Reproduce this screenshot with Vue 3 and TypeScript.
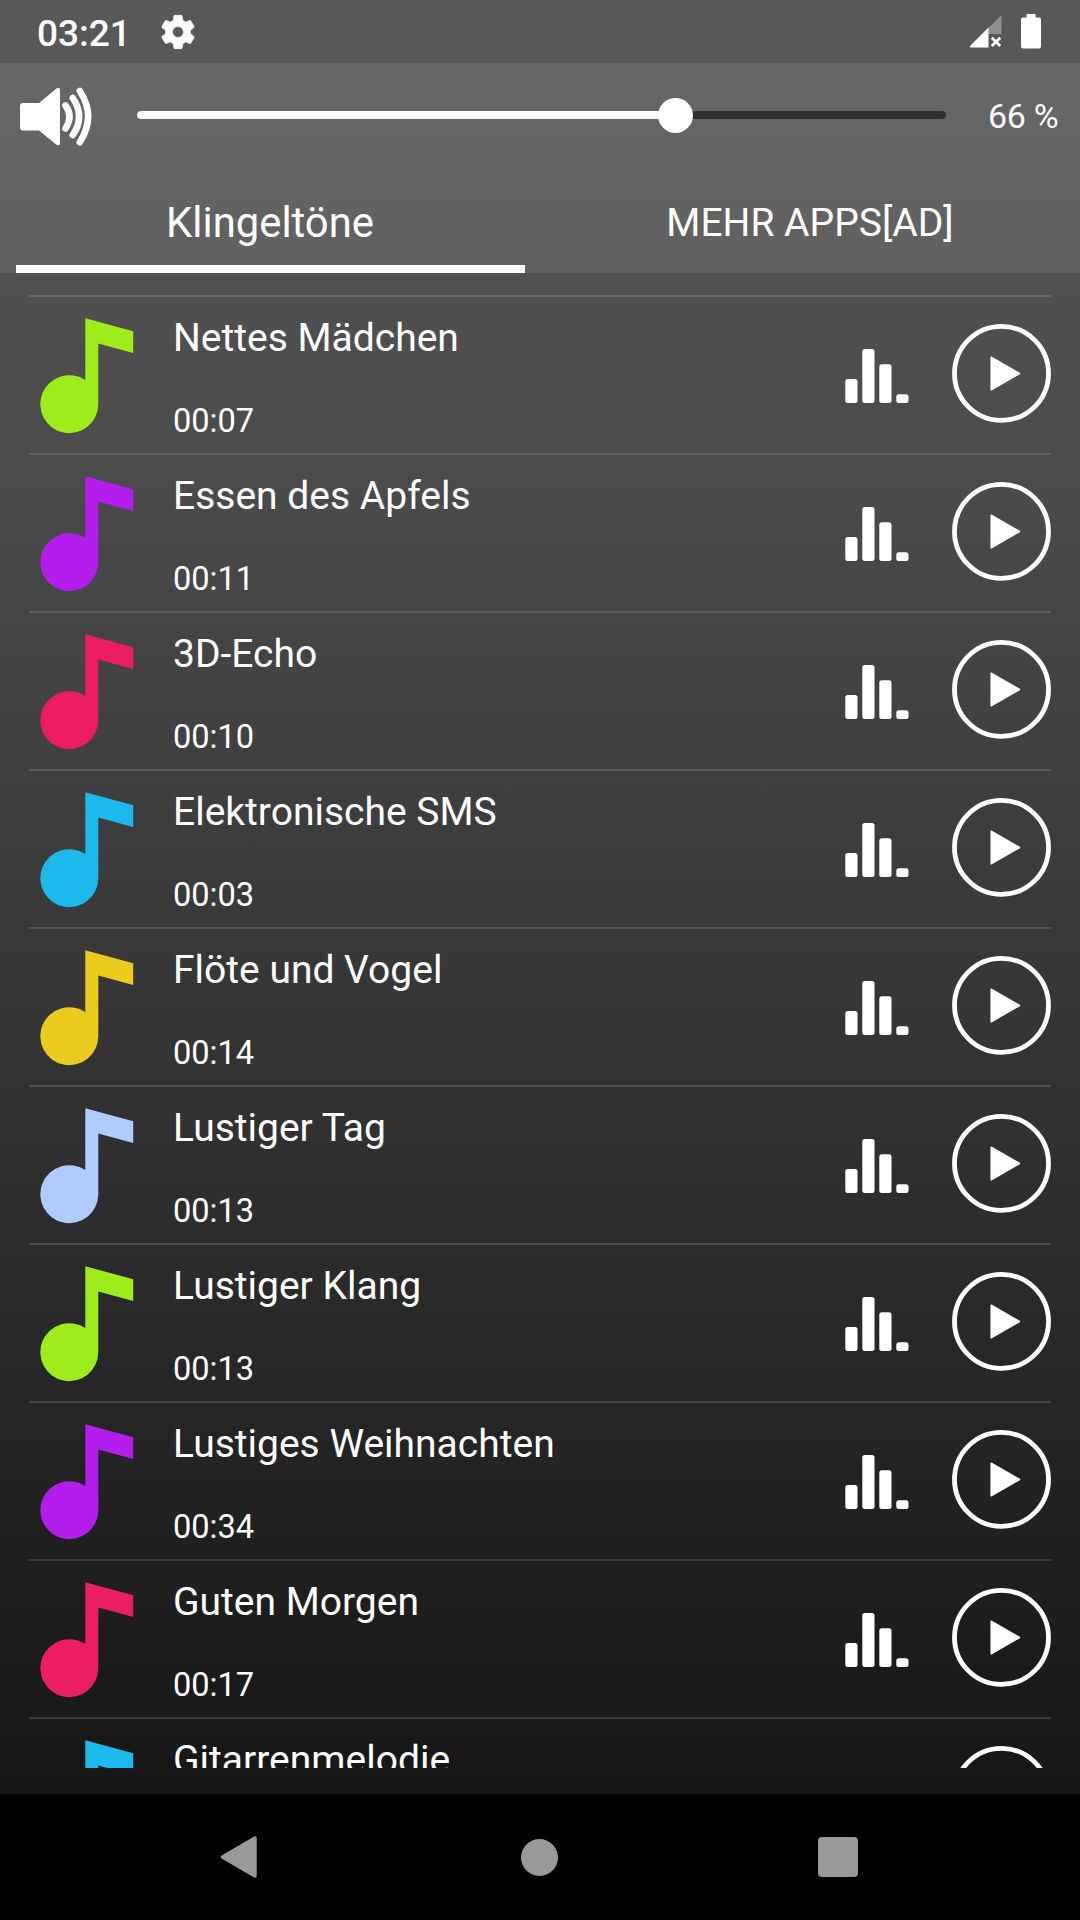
<script setup lang="ts">
import { ref } from 'vue'

interface Tone {
  title: string
  duration?: string
  color: string
}

const volume = ref(66)

const tones: Tone[] = [
  { title: 'Nettes Mädchen', duration: '00:07', color: '#9fec1c' },
  { title: 'Essen des Apfels', duration: '00:11', color: '#b31eec' },
  { title: '3D-Echo', duration: '00:10', color: '#ec1e62' },
  { title: 'Elektronische SMS', duration: '00:03', color: '#1eb9ec' },
  { title: 'Flöte und Vogel', duration: '00:14', color: '#ebcb1e' },
  { title: 'Lustiger Tag', duration: '00:13', color: '#b0ccff' },
  { title: 'Lustiger Klang', duration: '00:13', color: '#9fec1c' },
  { title: 'Lustiges Weihnachten', duration: '00:34', color: '#b31eec' },
  { title: 'Guten Morgen', duration: '00:17', color: '#ec1e62' },
  { title: 'Gitarrenmelodie', color: '#1eb9ec' },
]
</script>

<template>
  <div class="screen">
    <header class="status">
      <span class="clock">03:21</span>
      <svg class="gear" width="40" height="40" viewBox="0 0 24 24">
        <path
          fill="#fff"
          stroke="#fff"
          stroke-width=".4"
          stroke-linejoin="round"
          fill-rule="evenodd"
          d="M19.43 12.98c.04-.32.07-.64.07-.98s-.03-.66-.07-.98l2.11-1.65c.19-.15.24-.42.12-.64l-2-3.46c-.12-.22-.39-.3-.61-.22l-2.49 1c-.52-.4-1.08-.73-1.69-.98l-.38-2.65C14.46 2.18 14.25 2 14 2h-4c-.25 0-.46.18-.49.42l-.38 2.65c-.61.25-1.17.59-1.69.98l-2.49-1c-.23-.09-.49 0-.61.22l-2 3.46c-.13.22-.07.49.12.64l2.11 1.65c-.04.32-.07.65-.07.98s.03.66.07.98l-2.11 1.65c-.19.15-.24.42-.12.64l2 3.46c.12.22.39.3.61.22l2.49-1c.52.4 1.08.73 1.69.98l.38 2.65c.03.24.24.42.49.42h4c.25 0 .46-.18.49-.42l.38-2.65c.61-.25 1.17-.59 1.69-.98l2.49 1c.23.09.49 0 .61-.22l2-3.46c.12-.22.07-.49-.12-.64l-2.11-1.65zM12 15.3c-1.82 0-3.3-1.48-3.3-3.3s1.48-3.3 3.3-3.3 3.3 1.48 3.3 3.3-1.48 3.3-3.3 3.3z"
        />
      </svg>
      <div class="status-right">
        <svg width="34" height="34" viewBox="0 0 34 34">
          <path d="M19.500 13L32.500 0V19H19.500Z" fill="#8f8f8f" />
          <path d="M1.500 30.500L19.500 12.500V32.500H2Q0 32.300 1.500 30.500Z" fill="#fff" />
          <path d="M22.800 22.800L31.200 31M31.200 22.800L22.800 31" stroke="#fff" stroke-width="2.800" />
        </svg>
        <svg width="22" height="35" viewBox="0 0 22 35">
          <path
            d="M6.500 0H15.500V3.500H19Q21 3.500 21 5.500V32.500Q21 34.500 19 34.500H3Q1 34.500 1 32.500V5.500Q1 3.500 3 3.500H6.500Z"
            fill="#fff"
          />
        </svg>
      </div>
    </header>

    <section class="controls">
      <div class="volume">
        <svg class="speaker" width="76" height="60" viewBox="0 0 76 60">
          <path
            d="M4 16H20L37.500 1.500Q41 -0.500 41 3V56Q41 59.500 37.500 57.800L20 43.500H4Q1 43.500 1 40V19Q1 16 4 16Z"
            fill="#fff"
          />
          <g fill="none" stroke="#fff" stroke-width="6.600" stroke-linecap="round">
            <path d="M46.500 18.500Q54.500 29.500 46.500 41.500" />
            <path d="M53.800 11Q66.500 29.500 53.800 48" />
            <path d="M60.800 4Q77.500 29.500 60.800 55.200" />
          </g>
        </svg>
        <div class="track">
          <div class="fill" :style="{ width: volume + '%' }"></div>
          <div class="thumb" :style="{ left: volume + '%' }"></div>
        </div>
        <span class="percent">{{ volume }} %</span>
      </div>
      <nav class="tabs">
        <div class="tab active">Klingeltöne</div>
        <div class="tab more">MEHR APPS[AD]</div>
      </nav>
    </section>

    <main class="list">
      <article v-for="tone in tones" :key="tone.title" class="row">
        <svg class="note" width="94" height="116" viewBox="0 0 94 116">
          <path
            :fill="tone.color"
            d="M45.300 0.300L93.200 13.200V35L58.300 25.500V86.500A29 29 0 1 1 45.300 62Z"
          />
        </svg>
        <div class="text">
          <div class="title">{{ tone.title }}</div>
          <div v-if="tone.duration" class="duration">{{ tone.duration }}</div>
        </div>
        <svg class="bars" width="64" height="54" viewBox="0 0 64 54" fill="#fff">
          <rect x="0.300" y="30" width="12.200" height="24" rx="2.500" />
          <rect x="17.300" y="0" width="12.200" height="54" rx="2.500" />
          <rect x="34.300" y="15.200" width="12.200" height="38.800" rx="2.500" />
          <rect x="51.300" y="45.300" width="12.200" height="8.700" rx="2.500" />
        </svg>
        <svg class="play" width="100" height="100" viewBox="0 0 100 100">
          <circle cx="50.500" cy="50.400" r="47" fill="none" stroke="#fff" stroke-width="4.800" />
          <path
            d="M40.200 34.200L68.500 50.500L40.200 66.800Z"
            fill="#fff"
            stroke="#fff"
            stroke-width="1.500"
            stroke-linejoin="round"
          />
        </svg>
      </article>
    </main>

    <footer class="navbar">
      <svg width="40" height="44" viewBox="0 0 40 44">
        <path
          d="M3.500 22L36 3V41Z"
          fill="#999"
          stroke="#999"
          stroke-width="3.500"
          stroke-linejoin="round"
        />
      </svg>
      <div class="home"></div>
      <div class="recent"></div>
    </footer>
  </div>
</template>

<style>
body {
  margin: 0;
  background: #000;
}
</style>

<style scoped>
.screen {
  width: 1080px;
  height: 1920px;
  display: flex;
  flex-direction: column;
  overflow: hidden;
  color: #fff;
  font-family: Roboto, 'Liberation Sans', sans-serif;
  background: linear-gradient(#595959 0, #505050 280px, #4a4a4a 500px, #161616 1794px);
}

.screen svg {
  display: block;
  flex: none;
}

.status {
  height: 63px;
  flex: none;
  display: flex;
  align-items: flex-start;
  background: #585858;
}

.clock {
  margin: 12px 0 0 37px;
  width: 121px;
  font-size: 37px;
  line-height: 44px;
  font-weight: 500;
}

.gear {
  margin-top: 12px;
}

.status-right {
  display: flex;
  align-items: flex-end;
  gap: 17px;
  margin: 14px 38px 0 auto;
}

.controls {
  height: 210px;
  flex: none;
  display: flex;
  flex-direction: column;
  background: linear-gradient(#676767, #606060);
}

.volume {
  height: 104px;
  display: flex;
  align-items: center;
}

.speaker {
  margin: 3px 0 0 19px;
}

.track {
  position: relative;
  width: 809px;
  height: 8px;
  margin-left: 42px;
  border-radius: 4px;
  background: #303030;
}

.fill {
  height: 8px;
  border-radius: 4px;
  background: #fff;
}

.thumb {
  position: absolute;
  top: -13.5px;
  width: 35px;
  height: 35px;
  margin-left: -13px;
  border-radius: 50%;
  background: #fff;
}

.percent {
  margin: 2px 0 0 42px;
  font-size: 34px;
  line-height: 40px;
  letter-spacing: -0.3px;
  white-space: nowrap;
}

.tabs {
  flex: 1;
  display: flex;
}

.tab {
  box-sizing: border-box;
  width: 509px;
  margin-left: 15.500px;
  padding-top: 30px;
  text-align: center;
  font-size: 41.800px;
  line-height: 52px;
}

.tab.active {
  border-bottom: 8px solid #fff;
}

.tab.more {
  margin-left: 31px;
  font-size: 39px;
}

.list {
  height: 1473px;
  flex: none;
  margin: 22px 29px 0;
  overflow: hidden;
}

.row {
  box-sizing: border-box;
  height: 158px;
  display: flex;
  align-items: flex-start;
  border-top: 2px solid rgba(255, 255, 255, 0.14);
}

.note {
  margin: 21px 0 0 11px;
}

.text {
  width: 672px;
  margin: 17px 0 0 39px;
}

.title {
  font-size: 39px;
  line-height: 48px;
  white-space: nowrap;
}

.duration {
  margin-top: 39px;
  font-size: 32.600px;
  line-height: 40px;
}

.bars {
  margin-top: 52px;
}

.play {
  margin: 26px 0 0 42px;
}

.navbar {
  height: 126px;
  flex: none;
  margin-top: 26px;
  box-sizing: border-box;
  padding: 0 222px 0 219px;
  display: flex;
  align-items: center;
  justify-content: space-between;
  background: #000;
}

.home {
  width: 37px;
  height: 37px;
  margin-left: 2px;
  border-radius: 50%;
  background: #999;
}

.recent {
  width: 40px;
  height: 40px;
  border-radius: 4px;
  background: #999;
}
</style>
